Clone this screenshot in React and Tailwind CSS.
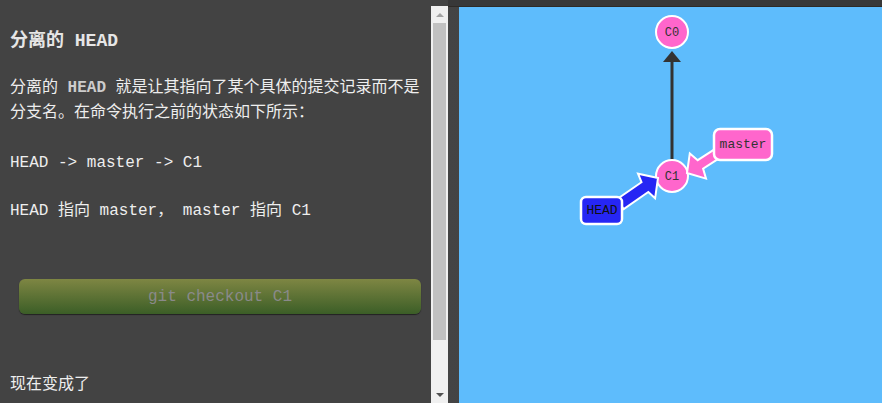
const mono = "font-['Liberation_Mono','Noto_Sans_CJK_SC',monospace]";

function arrowPoints(tip, dir, len, shaft, headW, headL, barb) {
  const perp = [dir[1] * -1, dir[0]];
  const pts = [
    [0, 0],
    [headL, headW],
    [headL + barb, shaft],
    [len, shaft],
    [len, -shaft],
    [headL + barb, -shaft],
    [headL, -headW],
  ];
  return pts
    .map(([u, n]) => {
      const x = tip[0] + u * dir[0] + n * perp[0];
      const y = tip[1] + u * dir[1] + n * perp[1];
      return `${x.toFixed(1)},${y.toFixed(1)}`;
    })
    .join(" ");
}

function Commit({ x, y, label }) {
  return (
    <g>
      <circle cx={x} cy={y} r="16" fill="#ff66cc" stroke="#ffffff" strokeWidth="2" />
      <text
        x={x}
        y={y + 4}
        textAnchor="middle"
        fontSize="12"
        fill="#333"
        fontFamily="Liberation Mono, monospace"
      >
        {label}
      </text>
    </g>
  );
}

function GitCanvas() {
  return (
    <svg width="423" height="396" viewBox="0 0 423 396" className="block">
      <line x1="213" y1="54" x2="213" y2="153" stroke="#333" strokeWidth="3" />
      <polygon points="213,44 222,55 204,55" fill="#333" />
      <Commit x={213} y={25} label="C0" />
      <Commit x={213} y={169} label="C1" />
      <polygon
        points={arrowPoints([228, 166], [0.84, -0.54], 45, 5, 15, 13, 3)}
        fill="#ff66cc"
        stroke="#ffffff"
        strokeWidth="2"
      />
      <polygon
        points={arrowPoints([199, 171], [-0.82, 0.57], 46, 6, 15, 14, 2)}
        fill="#2626f4"
        stroke="#ffffff"
        strokeWidth="2"
      />
      <rect x="255" y="122" width="58" height="31" rx="6" fill="#ff66cc" stroke="#ffffff" strokeWidth="2.5" />
      <text x="284" y="141" textAnchor="middle" fontSize="13" fill="#333" fontFamily="Liberation Mono, monospace">
        master
      </text>
      <rect x="122" y="190" width="41" height="27" rx="5" fill="#2626f4" stroke="#ffffff" strokeWidth="2.5" />
      <text x="143" y="207" textAnchor="middle" fontSize="13" fill="#111" fontFamily="Liberation Mono, monospace">
        HEAD
      </text>
    </svg>
  );
}

function Scrollbar() {
  return (
    <div className="mt-[6px] flex w-[17px] flex-col items-center bg-[#f0f0f0]">
      <div className="flex h-[17px] w-full items-center justify-center">
        <div className="h-0 w-0 border-x-[4px] border-b-[4px] border-x-transparent border-b-[#a3a3a3]" />
      </div>
      <div className="h-[317px] w-[13px] bg-[#c1c1c1]" />
      <div className="flex-1" />
      <div className="flex h-[17px] w-full items-center justify-center">
        <div className="h-0 w-0 border-x-[4px] border-t-[4px] border-x-transparent border-t-[#505050]" />
      </div>
    </div>
  );
}

export default function App() {
  return (
    <div className="flex h-[403px] w-[882px] overflow-hidden bg-[#434343] font-['Noto_Sans_CJK_SC',sans-serif] text-[#eeeeee]">
      <div className="flex w-[448px] shrink-0">
        <div className="w-[431px] pl-[10px] pr-[10px] pt-[29px]">
          <h2 className={`text-[18px] font-bold leading-[24px] text-[#e6e6e6] ${mono}`}>分离的 HEAD</h2>
          <p className={`mt-[23px] text-[16px] leading-[25px] ${mono}`}>
            分离的 <span className="font-bold text-[#cccccc]">HEAD</span> 就是让其指向了某个具体的提交记录而不是分支名。在命令执行之前的状态如下所示：
          </p>
          <p className={`mt-[25px] text-[16px] leading-[24px] ${mono}`}>HEAD -&gt; master -&gt; C1</p>
          <p className={`mt-[24px] text-[16px] leading-[24px] ${mono}`}>HEAD 指向 master， master 指向 C1</p>
          <div
            className={`ml-[9px] mt-[56px] flex h-[35px] w-[402px] items-center justify-center rounded-md bg-gradient-to-b from-[#7e8643] to-[#3b5e27] text-[16px] text-[#8a8a8a] shadow-[0_1px_1px_rgba(0,0,0,0.5)] ${mono}`}
          >
            git checkout C1
          </div>
          <p className="mt-[56px] text-[16px] leading-[24px]">现在变成了</p>
        </div>
        <Scrollbar />
      </div>
      <div className="flex flex-1 flex-col bg-[#383838]">
        <div className="h-[7px] shrink-0 border-b border-[#2e2a26]" />
        <div className="flex flex-1 bg-gradient-to-r from-[#444444] to-[#333333] pl-[11px]">
          <div className="flex-1 bg-[#5ebcfc]">
            <GitCanvas />
          </div>
        </div>
      </div>
    </div>
  );
}
